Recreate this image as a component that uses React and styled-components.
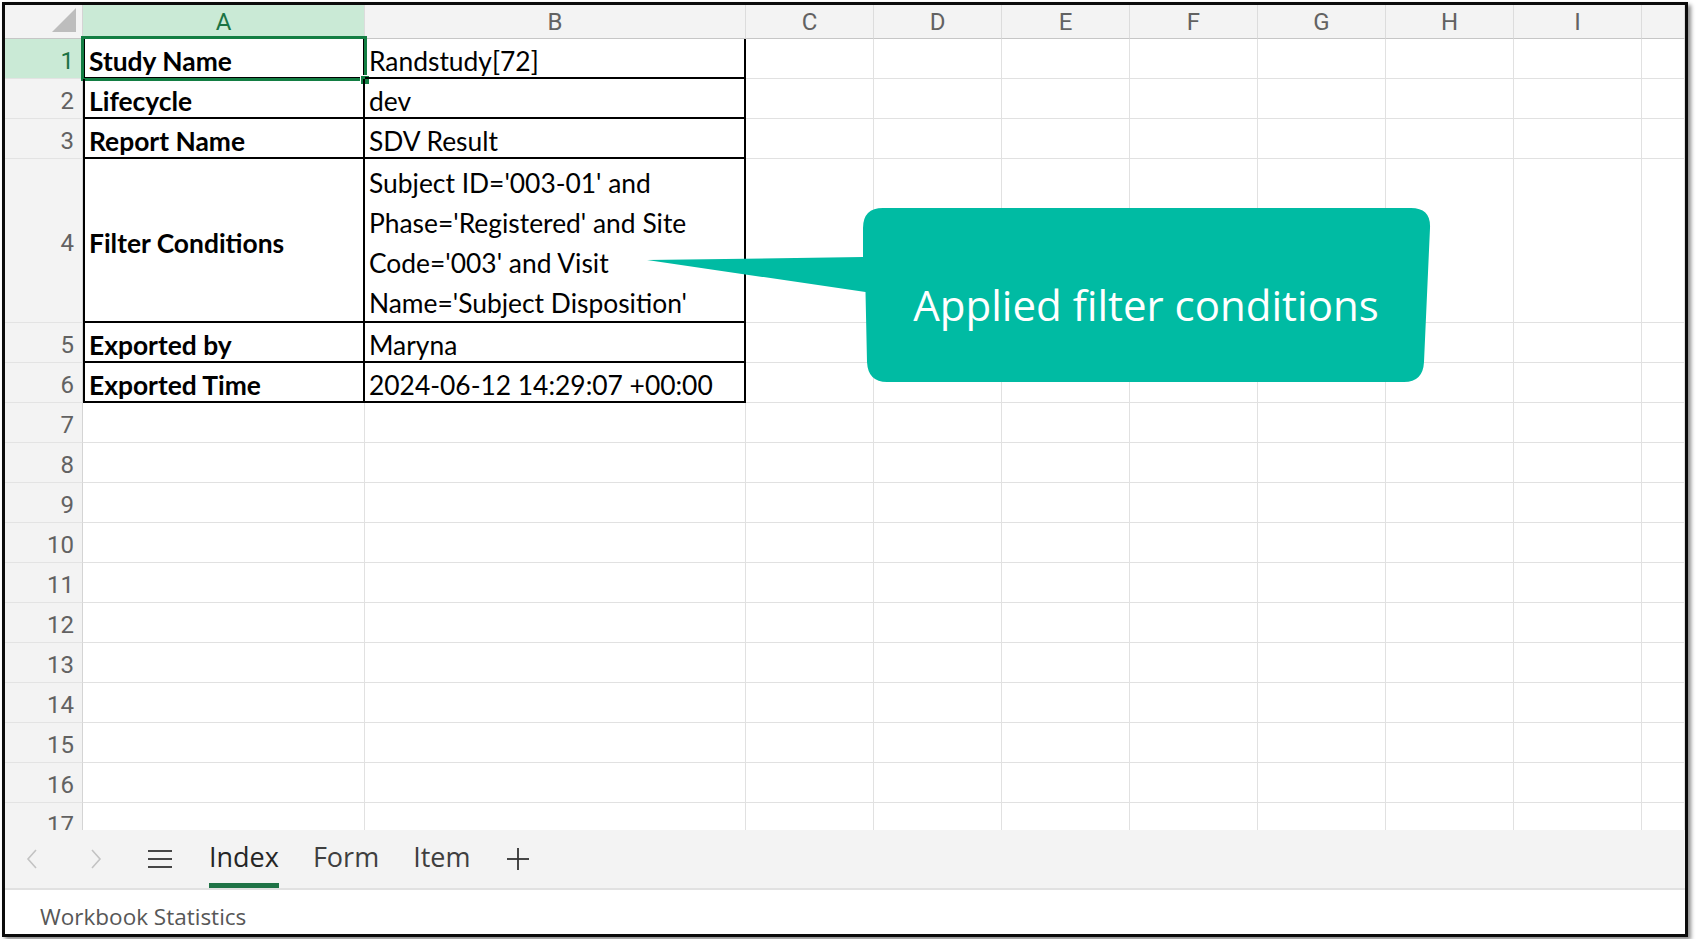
import React from "react";
import styled, { createGlobalStyle } from "styled-components";

const GlobalStyle = createGlobalStyle`
  html, body {
    margin: 0;
    padding: 0;
    background: #ffffff;
  }
  body {
    font-family: "Open Sans", "Noto Sans", sans-serif;
  }
`;

const COLUMNS = ["A", "B", "C", "D", "E", "F", "G", "H", "I", ""];

const rows = [
  { label: "Study Name", value: ["Randstudy[72]"] },
  { label: "Lifecycle", value: ["dev"] },
  { label: "Report Name", value: ["SDV Result"] },
  {
    label: "Filter Conditions",
    value: [
      "Subject ID='003-01' and",
      "Phase='Registered' and Site",
      "Code='003' and Visit",
      "Name='Subject Disposition'",
    ],
  },
  { label: "Exported by", value: ["Maryna"] },
  { label: "Exported Time", value: ["2024-06-12 14:29:07 +00:00"] },
];

const EMPTY_ROWS = Array.from({ length: 11 }, (_, i) => i + 7);

const App = () => {
  return (
    <>
      <GlobalStyle />
      <Frame>
        <SheetArea>
          <Grid>
            <Corner>
              <svg width="24" height="24" viewBox="0 0 24 24">
                <polygon points="24,0 24,24 0,24" fill="#bdbdbd" />
              </svg>
            </Corner>
            {COLUMNS.map((c, i) => (
              <ColHead key={i} $active={c === "A"}>
                {c}
              </ColHead>
            ))}

            {rows.map((r, i) => (
              <React.Fragment key={r.label}>
                <RowHead $active={i === 0}>
                  <Num>{i + 1}</Num>
                </RowHead>
                <Cell $boxed $first $bold $selected={i === 0}>
                  <Line>{r.label}</Line>
                </Cell>
                <Cell $boxed>
                  {r.value.map((line) => (
                    <Line key={line}>{line}</Line>
                  ))}
                </Cell>
                {COLUMNS.slice(2).map((c, j) => (
                  <Cell key={j} />
                ))}
              </React.Fragment>
            ))}

            {EMPTY_ROWS.map((n) => (
              <React.Fragment key={n}>
                <RowHead>
                  <Num>{n}</Num>
                </RowHead>
                {COLUMNS.map((c, j) => (
                  <Cell key={j} />
                ))}
              </React.Fragment>
            ))}
          </Grid>

          <Callout>
            <svg width="800" height="190" viewBox="0 0 800 190">
              <path
                d="M243 8 L771 8 Q791 8 790 28 L784 162 Q783 182 764 182 L247 182 Q228 182 227 162 L225.5 92 L7 60 L223 57 L223 28 Q223 8 243 8 Z"
                fill="#00bba3"
              />
            </svg>
            <CalloutText>Applied filter conditions</CalloutText>
          </Callout>
        </SheetArea>

        <TabBar>
          <NavButton>
            <svg width="12" height="22" viewBox="0 0 12 22">
              <polyline points="10,2 2,11 10,20" fill="none" stroke="#c3c3c3" strokeWidth="1.6" />
            </svg>
          </NavButton>
          <NavButton>
            <svg width="12" height="22" viewBox="0 0 12 22">
              <polyline points="2,2 10,11 2,20" fill="none" stroke="#c3c3c3" strokeWidth="1.6" />
            </svg>
          </NavButton>
          <NavButton $gap={22}>
            <svg width="24" height="20" viewBox="0 0 24 20">
              <line x1="0" y1="2" x2="24" y2="2" stroke="#333" strokeWidth="1.8" />
              <line x1="0" y1="10" x2="24" y2="10" stroke="#333" strokeWidth="1.8" />
              <line x1="0" y1="18" x2="24" y2="18" stroke="#333" strokeWidth="1.8" />
            </svg>
          </NavButton>
          <SheetTab $active>Index</SheetTab>
          <SheetTab>Form</SheetTab>
          <SheetTab>Item</SheetTab>
          <AddButton>
            <svg width="24" height="24" viewBox="0 0 24 24">
              <line x1="12" y1="1" x2="12" y2="23" stroke="#333" strokeWidth="1.8" />
              <line x1="1" y1="12" x2="23" y2="12" stroke="#333" strokeWidth="1.8" />
            </svg>
          </AddButton>
        </TabBar>

        <StatusBar>Workbook Statistics</StatusBar>
      </Frame>
    </>
  );
};

const Frame = styled.div`
  box-sizing: border-box;
  margin: 2px;
  width: 1686px;
  height: 935px;
  border: 3px solid #0b0b0b;
  box-shadow: 3px 3px 4px rgba(0, 0, 0, 0.45);
  display: flex;
  flex-direction: column;
  background: #fff;
  overflow: hidden;
`;

const SheetArea = styled.div`
  position: relative;
  height: 825px;
  flex: none;
  overflow: hidden;
`;

const Grid = styled.div`
  display: grid;
  grid-template-columns: 78px 282px 381px repeat(7, 128px) 1fr;
  grid-template-rows: 34px 40px 40px 40px 164px 40px 40px repeat(11, 40px);
`;

const HeadBase = styled.div`
  box-sizing: border-box;
  display: flex;
  align-items: center;
  background: #f3f3f3;
  font-family: Roboto, "Open Sans", sans-serif;
  font-size: 24px;
  color: #626262;
`;

const Corner = styled(HeadBase)`
  justify-content: flex-end;
  align-items: flex-end;
  padding: 0 6px 6px 0;
  border-right: 1px solid #d4d4d4;
  border-bottom: 1px solid #c6c6c6;
`;

const ColHead = styled(HeadBase)`
  justify-content: center;
  border-right: 1px solid #dcdcdc;
  border-bottom: 1px solid #c6c6c6;
  background: ${(p) => (p.$active ? "#caead6" : "#f3f3f3")};
  color: ${(p) => (p.$active ? "#1b7344" : "#626262")};
`;

const RowHead = styled(HeadBase)`
  justify-content: flex-end;
  padding-right: 8px;
  border-right: 1px solid #d4d4d4;
  border-bottom: 1px solid #e3e3e3;
  background: ${(p) => (p.$active ? "#caead6" : "#f3f3f3")};
  color: ${(p) => (p.$active ? "#1b7344" : "#626262")};
`;

const Num = styled.span`
  position: relative;
  top: 2px;
`;

const Cell = styled.div`
  box-sizing: border-box;
  position: relative;
  display: flex;
  flex-direction: column;
  justify-content: center;
  padding: 0 4px;
  white-space: nowrap;
  font-family: Lato, "Open Sans", sans-serif;
  font-size: 26.4px;
  line-height: 40px;
  font-weight: ${(p) => (p.$bold ? 700 : 400)};
  color: #000;
  border-right: ${(p) => (p.$boxed ? "2px solid #000" : "1px solid #e1e1e1")};
  border-bottom: ${(p) => (p.$boxed ? "2px solid #000" : "1px solid #e1e1e1")};
  border-left: ${(p) => (p.$boxed && p.$first ? "2px solid #000" : "none")};

  ${(p) =>
    p.$selected &&
    `
    &::before {
      content: "";
      position: absolute;
      left: -4px;
      top: -3px;
      right: -4px;
      bottom: -4px;
      border: 3px solid #137e43;
      pointer-events: none;
    }
    &::after {
      content: "";
      position: absolute;
      right: -7px;
      bottom: -8px;
      width: 8px;
      height: 8px;
      background: #137e43;
      border: 1px solid #fff;
    }
  `}
`;

const Line = styled.span`
  display: block;
  position: relative;
  top: 3px;
`;

const Callout = styled.div`
  position: absolute;
  left: 635px;
  top: 195px;
  width: 800px;
  height: 190px;
  display: flex;
  align-items: center;
  justify-content: center;
  padding: 18px 0 0 212px;
  box-sizing: border-box;

  svg {
    position: absolute;
    inset: 0;
  }
`;

const CalloutText = styled.span`
  position: relative;
  font-family: "Open Sans", sans-serif;
  font-size: 42px;
  color: #ffffff;
  white-space: nowrap;
`;

const TabBar = styled.div`
  box-sizing: border-box;
  height: 60px;
  flex: none;
  display: flex;
  align-items: stretch;
  background: #f3f3f3;
  border-bottom: 2px solid #e1e1e1;
`;

const NavButton = styled.div`
  width: 54px;
  margin-right: ${(p) => p.$gap ?? 10}px;
  display: flex;
  align-items: center;
  justify-content: center;
`;

const SheetTab = styled.div`
  box-sizing: border-box;
  display: flex;
  align-items: center;
  margin-right: 34px;
  font-family: "Open Sans", sans-serif;
  font-size: 27px;
  color: ${(p) => (p.$active ? "#262626" : "#3f3f3f")};
  border-bottom: 5px solid ${(p) => (p.$active ? "#1f7346" : "transparent")};
`;

const AddButton = styled.div`
  display: flex;
  align-items: center;
  margin-left: 2px;
`;

const StatusBar = styled.div`
  flex: 1;
  display: flex;
  align-items: center;
  padding: 8px 0 0 35px;
  font-family: "Open Sans", sans-serif;
  font-size: 22.5px;
  color: #575757;
`;

export default App;
